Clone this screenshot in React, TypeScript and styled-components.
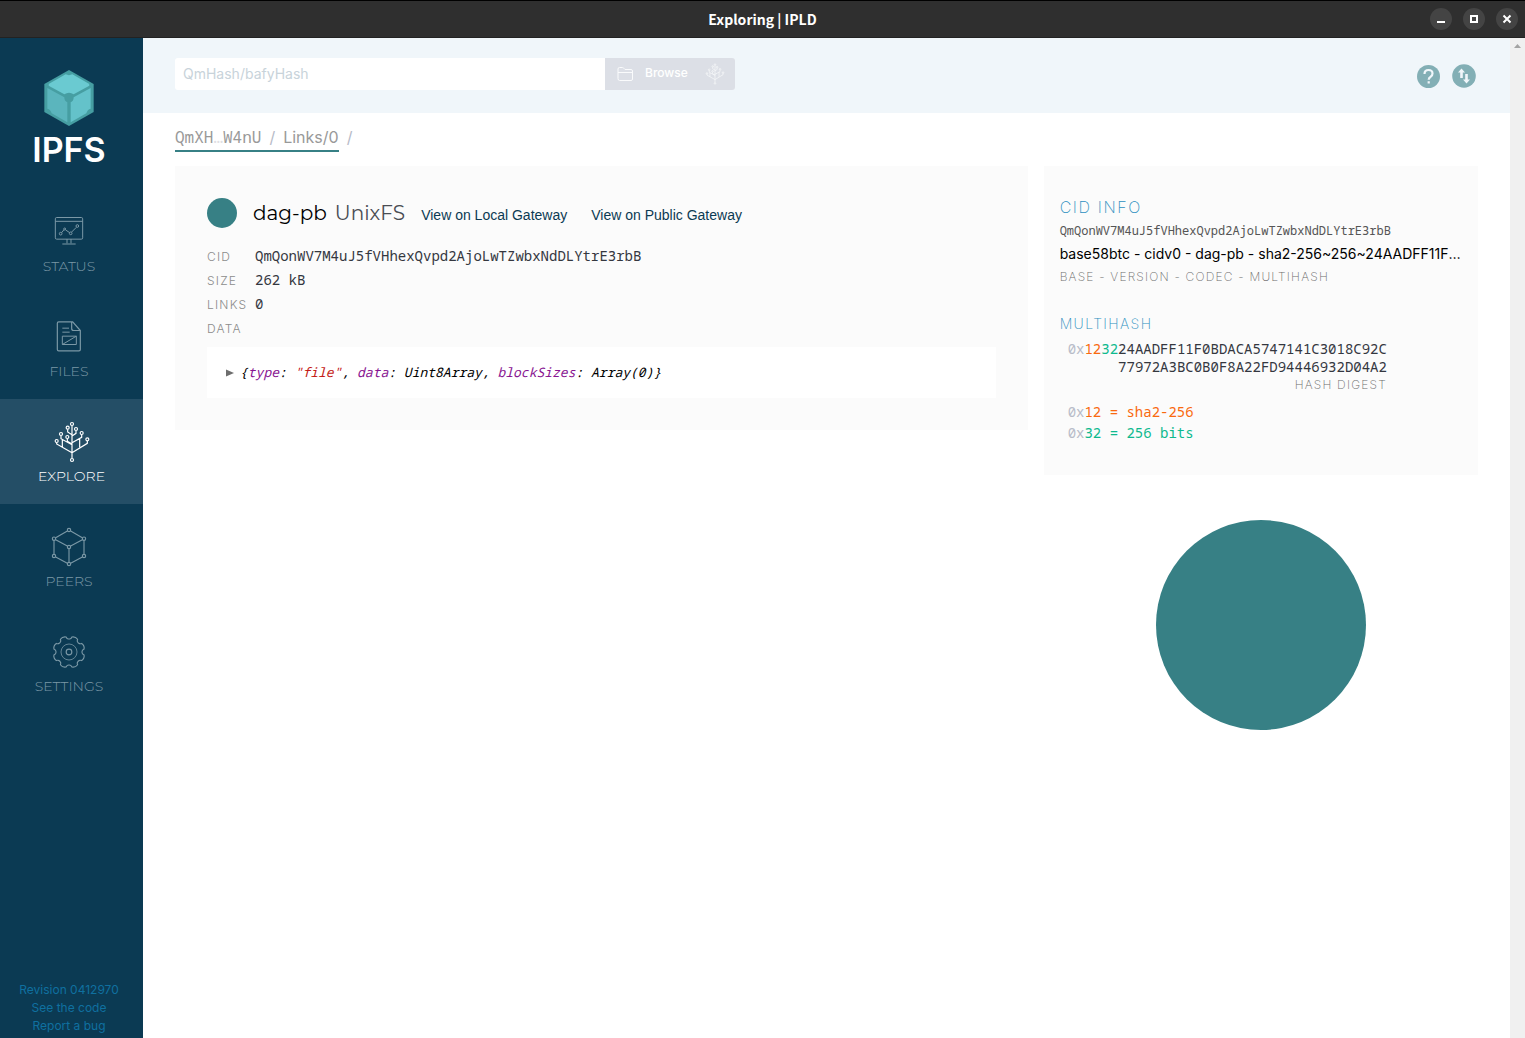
import React from 'react';
import styled, { createGlobalStyle } from 'styled-components';

const mono = '"Noto Sans Mono", "DejaVu Sans Mono", monospace';
const sans = 'Inter, "Liberation Sans", sans-serif';
const display = 'Montserrat, Inter, sans-serif';
const navy = '#0b3a53';
const teal = '#378085';

const GlobalStyle = createGlobalStyle`
  *, *::before, *::after { box-sizing: border-box; }
  body { margin: 0; background: #fff; font-family: ${sans}; }
  h1, h2, p, dl, dd, ul { margin: 0; padding: 0; }
  ul { list-style: none; }
  a { color: inherit; text-decoration: none; }
  button { border: 0; padding: 0; font: inherit; cursor: pointer; }
`;

const Window = styled.div`
  display: flex;
  flex-direction: column;
  height: 100vh;
`;

const TitleBar = styled.header`
  display: grid;
  grid-template-columns: 1fr auto 1fr;
  align-items: center;
  height: 38px;
  padding: 0 7px;
  flex: none;
  background: #2f2f2f;
  border-top: 1px solid #000;
  border-bottom: 1px solid #222;
`;

const WindowTitle = styled.h1`
  grid-column: 2;
  color: #fff;
  font: 700 14px/20px "Noto Sans CJK SC", "Noto Sans", sans-serif;
`;

const WindowButtons = styled.div`
  display: flex;
  justify-content: flex-end;
  gap: 11px;
`;

const WindowButton = styled.button`
  display: flex;
  width: 22px;
  height: 22px;
  border-radius: 50%;
  background: #444;
`;

const Body = styled.div`
  display: flex;
  flex: 1;
  min-height: 0;
`;

const Sidebar = styled.aside`
  display: flex;
  flex-direction: column;
  flex: none;
  width: 143px;
  padding: 32px 5px 3px 0;
  background: ${navy};
`;

const Logo = styled.a`
  display: flex;
  flex-direction: column;
  align-items: center;
  height: 119px;
  color: #fff;
  font: 600 34px/48px ${sans};
`;

const NavItem = styled.a<{ $active?: boolean }>`
  display: flex;
  flex-direction: column;
  align-items: center;
  height: 105px;
  padding-top: 20px;
  margin-right: ${p => (p.$active ? '-5px' : '0')};
  background: ${p => (p.$active ? '#244e66' : 'transparent')};
  color: ${p => (p.$active ? '#fff' : '#7b98a6')};
`;

const NavIcon = styled.span`
  display: flex;
  align-items: center;
  height: 46px;
`;

const NavLabel = styled.span`
  font: 300 14px/22px ${display};
`;

const SidebarFooter = styled.footer`
  display: flex;
  flex-direction: column;
  align-items: center;
  margin-top: auto;
  color: #117eb3;
  font-size: 12px;
  line-height: 18px;
  opacity: 0.8;
`;

const Content = styled.div`
  flex: 1;
  min-width: 0;
`;

const TopBar = styled.div`
  display: flex;
  justify-content: space-between;
  align-items: center;
  height: 75px;
  padding: 0 34px 0 32px;
  background: #f0f6fa;
`;

const SearchForm = styled.form`
  display: flex;
  flex: 0 1 560px;
  height: 32px;
  margin-bottom: 3px;
`;

const SearchInput = styled.input`
  flex: 1;
  min-width: 0;
  border: 0;
  border-radius: 3px 0 0 3px;
  padding: 0 8px;
  background: #fff;
  font: 400 14px/20px ${sans};
  outline: none;
  &::placeholder { color: #c8d3da; opacity: 1; }
`;

const BrowseButton = styled.button`
  display: flex;
  align-items: center;
  gap: 11px;
  width: 130px;
  padding: 0 10px 0 12px;
  border-radius: 0 3px 3px 0;
  background: #dcdfe6;
  color: #fafbfc;
  && { font: 500 12px/28px ${sans}; }
`;

const BrowseText = styled.span`
  flex: 1;
  height: 30px;
  color: #fff;
  text-align: left;
`;

const TopActions = styled.div`
  display: flex;
  gap: 12px;
`;

const RoundButton = styled.button`
  display: flex;
  width: 24px;
  height: 24px;
  background: none;
`;

const Main = styled.main`
  padding: 12px 32px 32px;
`;

const Breadcrumbs = styled.nav`
  display: flex;
  gap: 8px;
  height: 41px;
  color: #b7bbc8;
  font: 400 16px/25px ${sans};
`;

const Crumbs = styled.div`
  display: flex;
  gap: 8px;
  height: 27px;
  border-bottom: 2px solid ${teal};
`;

const Crumb = styled.a<{ $mono?: boolean }>`
  color: #999;
  font-family: ${p => (p.$mono ? mono : sans)};
`;

const Faint = styled.span`
  color: #e0e0e4;
`;

const Columns = styled.div`
  display: grid;
  grid-template-columns: minmax(0, 2fr) minmax(0, 1fr);
  align-items: start;
`;

const NodePanel = styled.section`
  margin-right: 16px;
  padding: 32px;
  background: #fbfbfb;
`;

const NodeHeader = styled.div`
  display: flex;
  align-items: center;
  height: 30px;
  margin-bottom: 16px;
`;

const Dot = styled.span`
  width: 30px;
  height: 30px;
  margin-right: 16px;
  border-radius: 50%;
  background: ${teal};
`;

const NodeType = styled.h2`
  margin-right: 8px;
  color: #000;
  font: 400 20px/30px ${display};
`;

const NodeFormat = styled.span`
  margin-right: 16px;
  color: #4a4d54;
  font: 400 20px/30px ${display};
`;

const GatewayLink = styled.a`
  margin-right: 24px;
  padding-top: 4px;
  color: ${navy};
  font: 400 14px/20px "Liberation Sans", Arial, sans-serif;
`;

const Facts = styled.dl`
  display: grid;
  grid-template-columns: 48px 1fr;
  grid-auto-rows: 24px;
  margin-bottom: 7px;
  line-height: 24px;
`;

const Label = styled.dt`
  padding-top: 1px;
  color: #8c8c8c;
  font: 300 12px/24px ${sans};
  letter-spacing: 0.1em;
  text-transform: uppercase;
`;

const Fact = styled.dd`
  color: #34373f;
  font: 400 14px/24px ${mono};
`;

const DataBox = styled.div`
  display: flex;
  align-items: center;
  gap: 6px;
  height: 51px;
  padding: 0 19px 2px;
  background: #fff;
  color: #000;
  font: italic 400 13px/20px ${mono};
`;

const Expand = styled.button`
  display: flex;
  padding-top: 2px;
  background: none;
`;

const Key = styled.span`
  color: #881391;
`;

const Str = styled.span`
  color: #c41a16;
`;

const InfoPanel = styled.section`
  padding: 29px 16px 32px;
  background: #fbfbfb;
`;

const InfoTitle = styled.h2<{ $small?: boolean }>`
  color: #2b8fc0;
  font: 200 ${p => (p.$small ? '14px' : '16px')}/24px ${sans};
  letter-spacing: 0.1em;
  margin-top: ${p => (p.$small ? '24px' : '0')};
`;

const InfoCid = styled.p`
  color: #555;
  font: 400 12px/23px ${mono};
`;

const InfoHuman = styled.p`
  overflow: hidden;
  color: #000;
  font: 400 14px/23px ${sans};
  text-overflow: ellipsis;
  white-space: nowrap;
`;

const Caption = styled.p`
  color: #6c6c6c;
  font: 200 12px/23px ${sans};
  letter-spacing: 0.1em;
`;

const Digest = styled.div`
  width: max-content;
  padding: 4px 0 8px 8px;
  color: #34373f;
  font: 400 14px/18px ${mono};
  text-align: right;
  ${Caption} { line-height: 17px; }
`;

const Legend = styled.div`
  padding-left: 8px;
  font: 400 14px/21px ${mono};
`;

const Tint = styled.span<{ $color: string }>`
  color: ${p => p.$color};
`;

const GraphArea = styled.div`
  display: flex;
  justify-content: center;
  padding-top: 45px;
`;

const ScrollTrack = styled.div`
  display: flex;
  justify-content: center;
  flex: none;
  width: 15px;
  padding-top: 6px;
  background: #f0f0f0;
`;

const prefix = '#b7bbc8';
const orange = '#f9690e';
const green = '#0eb98e';

function LogoCube() {
  return (
    <svg width="50" height="56" viewBox="133 90 148 168" aria-hidden="true">
      <path d="M207 90l74 42v84l-74 42-74-42v-84z" fill="#469ea2" />
      <path d="M197 103q10 5 20 0l51 29q-1 2 0 5l-47 26q-14-9-28 0l-47-26q1-3 0-5z" fill="#6acad1" />
      <path d="M142 144l51 28q0 12 9 15v60l-47-27q-3-12-13-14z" fill="#5bb5bd" />
      <path d="M272 144l-51 28q0 12-9 15v60l47-27q3-12 13-14z" fill="#64c2ca" />
    </svg>
  );
}

function StatusIcon() {
  return (
    <svg width="30" height="30" viewBox="162 531 90 90" fill="none" stroke="currentColor" strokeWidth="3" aria-hidden="true">
      <rect x="166" y="532.5" width="82" height="65" rx="4" />
      <path d="M166 544h82M201 597v13M213 597v13M187 612h40M185 578l7-9M197 570l12 8M215 576l14-14" />
      <circle cx="182" cy="581" r="4" /><circle cx="194" cy="567" r="3" />
      <circle cx="212" cy="580" r="4" /><circle cx="232" cy="558" r="4" />
    </svg>
  );
}

function FilesIcon() {
  return (
    <svg width="26" height="32" viewBox="168 63 78 95" fill="none" stroke="currentColor" strokeWidth="3.6" aria-hidden="true">
      <path d="M176 65h42l23 26v57q0 4-4 4h-61q-4 0-4-4v-79q0-4 4-4zM215 66v19q0 6 6 6h20" />
      <path d="M187 84h20M187 96h22M187 108h42v25h-42zM187 133l42-25" strokeWidth="3" />
    </svg>
  );
}

function TreeIcon({ width, height }: { width: number; height: number }) {
  const buds = [[216, 372], [203, 383], [228, 387], [183, 402], [202, 411], [245, 399], [170, 423], [262, 418], [216, 480]];
  return (
    <svg width={width} height={height} viewBox="162 363 108 126" fill="none" stroke="currentColor" strokeWidth="3.6" aria-hidden="true">
      <path d="M216 377v98M203 388v8l13 8M228 392v8l-12 8M202 416v8l14 8M183 407v9l33 18M245 404v8l-29 16M187 418v23M239 415v27M170 428v4l46 26M262 423v7l-46 28" />
      {buds.map(([x, y]) => <circle key={`${x}-${y}`} cx={x} cy={y} r="4.5" />)}
    </svg>
  );
}

function PeersIcon() {
  const corners = [[207, 60], [162, 86], [252, 86], [207, 111], [162, 138], [252, 138], [207, 162]];
  return (
    <svg width="36" height="40" viewBox="153 51 108 120" fill="none" stroke="currentColor" strokeWidth="3.4" aria-hidden="true">
      <path d="M202 63l-35 20M212 63l35 20M162 91v42M252 91v42M167 141l35 19M247 141l-35 19M167 89l35 19M247 89l-35 19M207 116v41" />
      {corners.map(([x, y]) => <circle key={`${x}-${y}`} cx={x} cy={y} r="5" />)}
    </svg>
  );
}

// Eight rounded teeth, each centred half a step off the axes.
const gearOutline = Array.from({ length: 8 }, (_, i) => {
  const at = (deg: number, r: number) => {
    const a = ((i * 45 + deg) * Math.PI) / 180;
    return `${(50 + r * Math.cos(a)).toFixed(1)} ${(50 + r * Math.sin(a)).toFixed(1)}`;
  };
  return `${i ? 'L' : 'M'}${at(6, 40)}Q${at(9, 41)} ${at(11, 46)}Q${at(22.5, 51)} ${at(34, 46)}Q${at(36, 41)} ${at(39, 40)}Q${at(45, 38)} ${at(51, 40)}`;
}).join('') + 'Z';

function SettingsIcon() {
  return (
    <svg width="34" height="34" viewBox="-1 -1 102 102" fill="none" stroke="currentColor" strokeWidth="3.4" aria-hidden="true">
      <path d={gearOutline} />
      <circle cx="50" cy="50" r="24" strokeWidth="2.4" />
      <circle cx="50" cy="50" r="8.5" />
    </svg>
  );
}

const navItems = [
  { label: 'STATUS', icon: <StatusIcon /> },
  { label: 'FILES', icon: <FilesIcon /> },
  { label: 'EXPLORE', icon: <TreeIcon width={36} height={42} />, active: true },
  { label: 'PEERS', icon: <PeersIcon /> },
  { label: 'SETTINGS', icon: <SettingsIcon /> },
];

export default function App() {
  return (
    <Window>
      <GlobalStyle />
      <TitleBar>
        <WindowTitle>Exploring | IPLD</WindowTitle>
        <WindowButtons>
          <WindowButton aria-label="Minimize">
            <svg width="22" height="22"><path d="M7 13h8v2H7z" fill="#fff" /></svg>
          </WindowButton>
          <WindowButton aria-label="Maximize">
            <svg width="22" height="22"><path d="M8 8h6v6H8z" fill="none" stroke="#fff" strokeWidth="2" /></svg>
          </WindowButton>
          <WindowButton aria-label="Close">
            <svg width="22" height="22"><path d="M7.5 7.5l7 7M14.5 7.5l-7 7" stroke="#fff" strokeWidth="2" /></svg>
          </WindowButton>
        </WindowButtons>
      </TitleBar>
      <Body>
        <Sidebar>
          <Logo href="#/"><LogoCube />IPFS</Logo>
          <nav>
            {navItems.map(item => (
              <NavItem key={item.label} href={`#/${item.label.toLowerCase()}`} $active={item.active}>
                <NavIcon>{item.icon}</NavIcon>
                <NavLabel>{item.label}</NavLabel>
              </NavItem>
            ))}
          </nav>
          <SidebarFooter>
            <a href="#revision">Revision 0412970</a>
            <a href="#code">See the code</a>
            <a href="#bug">Report a bug</a>
          </SidebarFooter>
        </Sidebar>
        <Content>
          <TopBar>
            <SearchForm>
              <SearchInput aria-label="CID or path" placeholder="QmHash/bafyHash" />
              <BrowseButton type="button">
                <svg width="17" height="16" viewBox="0 0 17 16" fill="none" stroke="currentColor" aria-hidden="true">
                  <path d="M1 12.500V3q0-1.500 1.500-1.500h3q1 0 1.500 1l1 1h6q1.500 0 1.500 1.500v8q0 1.500-1.500 1.500h-11.500q-1.500 0-1.500-2zM1 6.500h14.500" />
                </svg>
                <BrowseText>Browse</BrowseText>
                <TreeIcon width={20} height={22} />
              </BrowseButton>
            </SearchForm>
            <TopActions>
              <RoundButton aria-label="Help">
                <svg width="24" height="24" viewBox="0 0 24 24">
                  <circle cx="12.500" cy="12.500" r="11.500" fill="#83afb5" />
                  <path d="M8.500 10q0-4 4-4t4 3.500q0 1.800-1.800 3.200-2 1.200-2 3M12.700 17.200v2.200" fill="none" stroke="#f0f6fa" strokeWidth="2.200" />
                </svg>
              </RoundButton>
              <RoundButton aria-label="Connections">
                <svg width="24" height="24" viewBox="0 0 24 24">
                  <circle cx="12" cy="12" r="11.800" fill="#83afb5" />
                  <path d="M9.500 4.500l3.500 4h-2.200v5.500H8.200V8.500H6zM14.500 19.500l-3.500-4h2.200V10h2.600v5.500H18z" fill="#f0f6fa" />
                </svg>
              </RoundButton>
            </TopActions>
          </TopBar>
          <Main>
            <Breadcrumbs aria-label="Path">
              <Crumbs>
                <Crumb $mono href="#root">QmXH<Faint>…</Faint>W4nU</Crumb>
                <span>/</span>
                <Crumb href="#links">Links/0</Crumb>
              </Crumbs>
              <span>/</span>
            </Breadcrumbs>
            <Columns>
              <NodePanel>
                <NodeHeader>
                  <Dot />
                  <NodeType>dag-pb</NodeType>
                  <NodeFormat>UnixFS</NodeFormat>
                  <GatewayLink href="#local">View on Local Gateway</GatewayLink>
                  <GatewayLink href="#public">View on Public Gateway</GatewayLink>
                </NodeHeader>
                <Facts>
                  <Label>CID</Label><Fact>QmQonWV7M4uJ5fVHhexQvpd2AjoLwTZwbxNdDLYtrE3rbB</Fact>
                  <Label>Size</Label><Fact>262 kB</Fact>
                  <Label>Links</Label><Fact>0</Fact>
                  <Label>Data</Label>
                </Facts>
                <DataBox>
                  <Expand aria-label="Expand data">
                    <svg width="8" height="8"><path d="M0 0.500l8 3.500-8 3.500z" fill="#6e6e6e" /></svg>
                  </Expand>
                  <span>
                    {'{'}<Key>type</Key>: <Str>"file"</Str>, <Key>data</Key>: Uint8Array, <Key>blockSizes</Key>: Array(0){'}'}
                  </span>
                </DataBox>
              </NodePanel>
              <div>
                <InfoPanel>
                  <InfoTitle>CID INFO</InfoTitle>
                  <InfoCid>QmQonWV7M4uJ5fVHhexQvpd2AjoLwTZwbxNdDLYtrE3rbB</InfoCid>
                  <InfoHuman>base58btc - cidv0 - dag-pb - sha2-256~256~24AADFF11F0BDACA5747141C3018C92C77972A3BC0B0F8A22FD94446932D04A2</InfoHuman>
                  <Caption>BASE - VERSION - CODEC - MULTIHASH</Caption>
                  <InfoTitle $small>MULTIHASH</InfoTitle>
                  <Digest>
                    <p>
                      <Tint $color={prefix}>0x</Tint><Tint $color={orange}>12</Tint><Tint $color={green}>32</Tint>24AADFF11F0BDACA5747141C3018C92C
                    </p>
                    <p>77972A3BC0B0F8A22FD94446932D04A2</p>
                    <Caption>HASH DIGEST</Caption>
                  </Digest>
                  <Legend>
                    <p><Tint $color={prefix}>0x</Tint><Tint $color={orange}>12 = sha2-256</Tint></p>
                    <p><Tint $color={prefix}>0x</Tint><Tint $color={green}>32 = 256 bits</Tint></p>
                  </Legend>
                </InfoPanel>
                <GraphArea>
                  <svg width="210" height="210" role="img" aria-label="Node graph">
                    <circle cx="105" cy="105" r="105" fill={teal} />
                  </svg>
                </GraphArea>
              </div>
            </Columns>
          </Main>
        </Content>
        <ScrollTrack aria-hidden="true">
          <svg width="7" height="4"><path d="M0 4l3.500-4L7 4z" fill="#a3a3a3" /></svg>
        </ScrollTrack>
      </Body>
    </Window>
  );
}
